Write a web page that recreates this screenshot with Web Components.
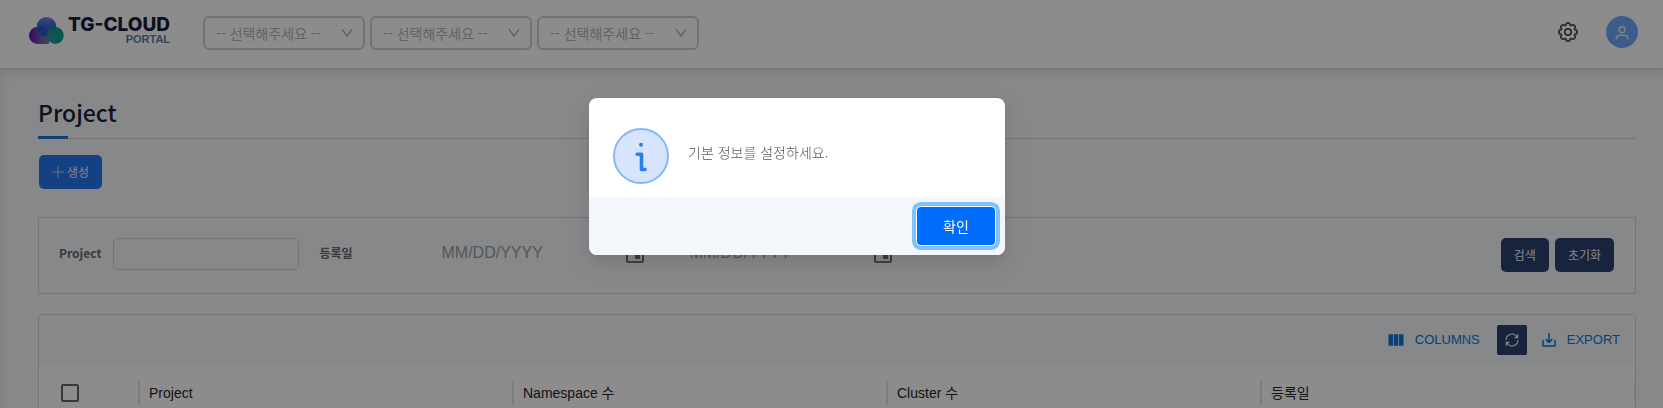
<!DOCTYPE html>
<html lang="ko">
<head>
<meta charset="utf-8">
<title>TG-CLOUD PORTAL</title>
<style>
  html, body { margin: 0; height: 100%; }
  body { font-family: "Noto Sans CJK KR", "Noto Sans", sans-serif; font-size: 14px; overflow: hidden; }
</style>
</head>
<body>
<portal-app></portal-app>

<script>
const define = (name, html, setup) => {
  const template = document.createElement('template');
  template.innerHTML = html;
  customElements.define(name, class extends HTMLElement {
    constructor() {
      super();
      this.attachShadow({ mode: 'open' }).append(template.content.cloneNode(true));
    }
    connectedCallback() { if (setup) setup(this, this.shadowRoot); }
  });
};

define('brand-logo', `
  <style>
    :host { display: block; }
    a { display: flex; gap: 4px; color: #17203f; text-decoration: none; }
    svg { width: 35px; height: 27px; margin-top: 1px; }
    .name { display: grid; justify-items: end; padding-top: 1px; }
    b { font: 800 19px/16px Inter, sans-serif; }
    small { font: 700 11px/12px "Liberation Sans", sans-serif; color: #617d99; }
  </style>
  <a href="#">
    <svg viewBox="0 0 35 27" aria-hidden="true">
      <defs>
        <linearGradient id="l"><stop offset="0" stop-color="#6409c8"/><stop offset=".5" stop-color="#7a4fa8"/><stop offset="1" stop-color="#5a8fae"/></linearGradient>
        <linearGradient id="t" x2="0" y2="1"><stop offset="0" stop-color="#7d70e0"/><stop offset=".5" stop-color="#2058cc"/><stop offset="1" stop-color="#1c5fc0"/></linearGradient>
        <linearGradient id="r"><stop offset="0" stop-color="#3d8f9f"/><stop offset=".5" stop-color="#009b8c"/><stop offset="1" stop-color="#009587"/></linearGradient>
      </defs>
      <path d="M8.500 10a8.500 8.500 0 0 0 0 17H20V14L13 10z" fill="url(#l)"/>
      <circle cx="17.500" cy="9.800" r="9.800" fill="url(#t)" fill-opacity=".92"/>
      <circle cx="26.300" cy="18.500" r="8.500" fill="url(#r)" fill-opacity=".93"/>
    </svg>
    <span class="name"><b>TG-CLOUD</b><small>PORTAL</small></span>
  </a>`);

define('scope-select', `
  <style>
    :host { display: block; position: relative; width: 162px; }
    select { appearance: none; display: block; box-sizing: border-box; width: 100%; height: 34px; margin: 0;
      padding: 0 32px 0 11px; border: 2px solid #d0d0d0; border-radius: 6px; background: #fff;
      font: 14px "Noto Sans CJK KR", sans-serif; color: #b5b5b5; opacity: 1; }
    svg { position: absolute; right: 12px; top: 11px; width: 12px; height: 12px; fill: none; stroke: #a8a8a8; stroke-width: 1.200; pointer-events: none; }
  </style>
  <select><option>-- 선택해주세요 --</option></select>
  <svg viewBox="0 0 12 12" aria-hidden="true"><path d="M1 2.200 6 9.200 11 2.200"/></svg>`,
  (host, root) => root.querySelector('select').setAttribute('aria-label', host.getAttribute('label')));

define('portal-header', `
  <style>
    :host { display: flex; align-items: flex-start; box-sizing: border-box; height: 69px; padding: 16px 25px 0 29px;
      background: #fff; border-bottom: 1px solid #d8d8d8; box-shadow: 0 2px 12px rgba(0,0,0,.14); position: relative; }
    nav { display: flex; gap: 5px; margin-left: 33px; }
    .tools { display: flex; align-items: center; gap: 28px; height: 32px; margin-left: auto; }
    button { display: grid; place-items: center; padding: 0; border: 0; background: none; }
    .gear svg { width: 20px; height: 20px; fill: none; stroke: #484d60; stroke-width: 1.500; }
    .user { width: 32px; height: 32px; border-radius: 50%; background: #6da9fa; }
    .user svg { width: 16px; height: 16px; fill: none; stroke: #e6edf8; stroke-width: 1.400; stroke-linecap: round; }
  </style>
  <brand-logo></brand-logo>
  <nav>
    <scope-select label="테넌트"></scope-select>
    <scope-select label="클러스터"></scope-select>
    <scope-select label="프로젝트"></scope-select>
  </nav>
  <div class="tools">
    <button class="gear" aria-label="설정"><svg viewBox="-.7 -.7 17.400 17.400"><circle cx="8" cy="8" r="2.800"/><path d="M9.796 1.343c-.527-1.790-3.065-1.790-3.592 0l-.094.319a.873.873 0 0 1-1.255.520l-.292-.160c-1.640-.892-3.433.902-2.540 2.541l.159.292a.873.873 0 0 1-.520 1.255l-.319.094c-1.790.527-1.790 3.065 0 3.592l.319.094a.873.873 0 0 1 .520 1.255l-.160.292c-.892 1.640.901 3.434 2.541 2.540l.292-.159a.873.873 0 0 1 1.255.520l.094.319c.527 1.790 3.065 1.790 3.592 0l.094-.319a.873.873 0 0 1 1.255-.520l.292.160c1.640.893 3.434-.902 2.540-2.541l-.159-.292a.873.873 0 0 1 .520-1.255l.319-.094c1.790-.527 1.790-3.065 0-3.592l-.319-.094a.873.873 0 0 1-.520-1.255l.160-.292c.893-1.640-.902-3.433-2.541-2.540l-.292.159a.873.873 0 0 1-1.255-.520z"/></svg></button>
    <button class="user" aria-label="사용자"><svg viewBox="0 0 16 16"><circle cx="8" cy="5.800" r="3"/><path d="M2.200 15c0-2.600 1.400-3.600 3.300-3.600h5c1.900 0 3.300 1 3.300 3.600"/></svg></button>
  </div>`);

define('page-title', `
  <style>
    :host { display: block; border-bottom: 1px solid #d3d6da; }
    h1 { margin: 0; padding: 0 0 6px; font-size: 23px; font-weight: 500; line-height: 35px; color: #1b1f38; }
    i { display: block; width: 30px; height: 3px; margin-bottom: -1px; background: #1f75d8; position: relative; }
  </style>
  <h1><slot></slot></h1><i></i>`);

define('ui-button', `
  <style>
    :host { display: inline-block; --fill: #2d406f; }
    :host([kind="primary"]) { --fill: #2577f0; }
    button { display: flex; align-items: center; gap: 3px; height: 34px; padding: 0 13px; border: 0; border-radius: 5px;
      background: var(--fill); color: #f0f3f8; font: 12px/18px "Noto Sans CJK KR", sans-serif; }
    ::slotted(svg) { width: 12px; height: 12px; stroke: currentColor; stroke-width: 1; opacity: .7; }
  </style>
  <button><slot></slot></button>`);

define('date-field', `
  <style>
    :host { display: flex; align-items: center; box-sizing: border-box; width: 234px; height: 32px; padding: 0 14px; }
    input { flex: 1; min-width: 0; height: 32px; box-sizing: border-box; padding: 0 0 2px; border: 0; background: none;
      font: 16px "Liberation Sans", sans-serif; }
    input::placeholder { color: #9c9d9f; opacity: 1; }
    button { padding: 0; border: 0; background: none; height: 24px; }
    svg { width: 24px; height: 24px; fill: #6f7072; }
  </style>
  <input placeholder="MM/DD/YYYY">
  <button aria-label="날짜 선택"><svg viewBox="0 0 24 24"><path d="M17 12h-5v5h5v-5zM16 1v2H8V1H6v2H5c-1.110 0-1.990.900-1.990 2L3 19c0 1.100.890 2 2 2h14c1.100 0 2-.900 2-2V5c0-1.100-.900-2-2-2h-1V1h-2zm3 18H5V8h14v11z"/></svg></button>`,
  (host, root) => root.querySelector('input').setAttribute('aria-label', host.getAttribute('label')));

define('search-panel', `
  <style>
    :host { display: block; border: 1px solid #d3d6da; }
    form { display: flex; align-items: flex-start; padding: 20px 21px 21px 20px; }
    label, .label { font: 700 12px/30px "Noto Sans CJK KR", sans-serif; color: #6b6c6e; }
    input { box-sizing: border-box; width: 186px; height: 32px; margin: 0 20px 0 12px; border: 1px solid #d0d3d7; border-radius: 5px; background: none; }
    .label { width: 108px; }
    .dates { display: flex; gap: 14px; }
    .actions { display: flex; gap: 6px; margin-left: auto; }
  </style>
  <form>
    <label for="project">Project</label><input id="project">
    <span class="label">등록일</span>
    <div class="dates"><date-field label="등록일 시작"></date-field><date-field label="등록일 종료"></date-field></div>
    <div class="actions"><ui-button>검색</ui-button><ui-button>초기화</ui-button></div>
  </form>`);

define('project-grid', `
  <style>
    :host { display: block; border: 1px solid #d3d6da; border-radius: 4px 4px 0 0; overflow: hidden; background: #fff; }
    .bar { display: flex; align-items: center; justify-content: flex-end; box-sizing: border-box; height: 51px; padding: 0 15px 1px 0; background: #f5f8fb; }
    .bar button { display: flex; align-items: center; gap: 9px; padding: 0; border: 0; background: none;
      font: 13px/20px "Liberation Sans", sans-serif; color: #0478d8; }
    .bar svg { width: 18px; height: 18px; fill: currentColor; }
    .bar .columns svg { width: 20px; height: 20px; }
    .bar .refresh { justify-content: center; width: 30px; height: 30px; margin: 0 13px 0 17px; border-radius: 2px; background: #2d406f; color: #edf0f5; }
    .refresh svg { width: 16px; height: 16px; }
    table { width: 100%; table-layout: fixed; border-collapse: collapse; }
    th { position: relative; height: 54px; padding: 0 10px; box-sizing: border-box; text-align: left; font: 14px/24px "Liberation Sans", "Noto Sans CJK KR", sans-serif; color: #262626; }
    th:first-child { width: 100px; padding: 0 22px; }
    th::after { content: ""; position: absolute; right: -1px; top: 15px; width: 2px; height: 24px; background: #e4e4e4; }
    input { appearance: none; display: block; box-sizing: border-box; width: 18px; height: 18px; margin: 0; border: 2px solid #666; border-radius: 2px; }
  </style>
  <div class="bar">
    <button class="columns"><svg viewBox="0 0 24 24"><path d="M14.670 5v14H9.330V5zM15.670 19H21V5h-5.330zM8.330 19V5H3v14z"/></svg>COLUMNS</button>
    <button class="refresh" aria-label="새로고침"><svg viewBox="0 0 16 16"><path d="M2 8a6 6 0 0 1 10.500-3.900M14 8a6 6 0 0 1-10.500 3.900" fill="none" stroke="currentColor" stroke-width="1.200"/><path d="M14.300 1.800v4.400H9.900zM1.700 14.200V9.800h4.400z"/></svg></button>
    <button><svg viewBox="0 0 24 24"><path d="M19 12v7H5v-7H3v7c0 1.100.900 2 2 2h14c1.100 0 2-.900 2-2v-7h-2zm-6 .670 2.590-2.580L17 11.500l-5 5-5-5 1.410-1.410L11 12.670V3h2z"/></svg>EXPORT</button>
  </div>
  <table>
    <thead><tr>
      <th><input type="checkbox" aria-label="전체 선택"></th>
      <th>Project</th><th>Namespace 수</th><th>Cluster 수</th><th>등록일</th>
    </tr></thead>
  </table>`);

define('alert-dialog', `
  <style>
    :host { position: fixed; inset: 0; display: flex; align-items: flex-start; justify-content: center;
      padding: 98px 69px 0 0; background: rgba(0,0,0,.45); }
    section { width: 416px; border-radius: 8px; overflow: hidden; background: #fff;
      box-shadow: 0 9px 28px 8px rgba(0,0,0,.05), 0 6px 16px rgba(0,0,0,.08), 0 3px 6px -4px rgba(0,0,0,.12); }
    .body { display: flex; gap: 19px; padding: 30px 24px 13px; }
    svg { width: 56px; height: 56px; }
    p { margin: 12px 0 0; font-size: 14px; line-height: 24px; font-weight: 300; color: #555; }
    footer { display: flex; justify-content: flex-end; padding: 10px; background: #f3f6fb; }
    button { width: 78px; height: 38px; padding: 0; border: 0; border-radius: 4px; background: #006cfa; color: #fff;
      font: 14px "Noto Sans CJK KR", sans-serif; box-shadow: 0 0 0 1px #fff, 0 0 0 5px #7dc1ff; }
  </style>
  <section role="alertdialog" aria-modal="true" aria-labelledby="message">
    <div class="body">
      <svg viewBox="0 0 56 56" aria-hidden="true">
        <circle cx="28" cy="28" r="27" fill="#d6e4fd" stroke="#85b7f5" stroke-width="2"/>
        <circle cx="28" cy="16.700" r="2" fill="#2880f0"/>
        <path d="M24.200 26.200h4.300v15.300h3.500" fill="none" stroke="#2880f0" stroke-width="3.600" stroke-linecap="round" stroke-linejoin="round"/>
      </svg>
      <p id="message"><slot></slot></p>
    </div>
    <footer><button>확인</button></footer>
  </section>`);

define('portal-app', `
  <style>
    :host { display: flex; flex-direction: column; height: 100vh; overflow: hidden; background: #f5f8fb; }
    portal-header { flex: none; }
    main { flex: 1; min-height: 0; padding: 26px 27px 0 38px; box-shadow: inset 12px 0 10px -8px rgba(0,0,0,.06); }
    .actions { display: flex; padding: 16px 1px 28px; }
    project-grid { margin-top: 20px; }
  </style>
  <portal-header></portal-header>
  <main>
    <page-title>Project</page-title>
    <div class="actions"><ui-button kind="primary"><svg viewBox="0 0 12 12" aria-hidden="true"><path d="M6 0v12M0 6h12"/></svg>생성</ui-button></div>
    <search-panel></search-panel>
    <project-grid></project-grid>
  </main>
  <alert-dialog>기본 정보를 설정하세요.</alert-dialog>`);
</script>
</body>
</html>
